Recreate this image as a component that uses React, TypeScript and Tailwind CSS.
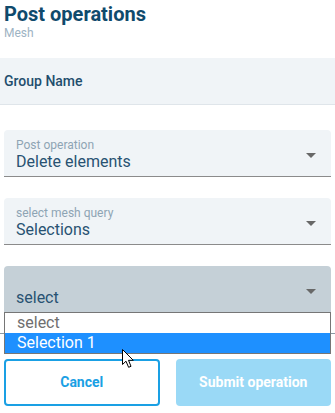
import React from 'react';

type FieldProps = {
  label?: string;
  value: string;
  active?: boolean;
  children?: React.ReactNode;
};

const Caret = () => (
  <span className="mt-1 h-0 w-0 border-x-[5px] border-t-[5px] border-x-transparent border-t-[#686868]" />
);

const SelectField: React.FC<FieldProps> = ({ label, value, active, children }) => (
  <div
    className={`relative flex items-center justify-between rounded-t-[4px] pl-3 pr-[15px] ${
      active ? 'h-[48px] border-b-2 border-[#11405e] bg-[#c5d0d7]' : 'h-[47px] border-b border-[#8b8b8b] bg-[#f0f4f7]'
    }`}
  >
    <div className="flex flex-col self-start pt-2">
      <span className="h-[14px] text-[12px] leading-[14px] text-[#8ea4b4]">{label}</span>
      <span className="text-[16px] leading-[20px] text-[#285272]">{value}</span>
    </div>
    <Caret />
    {children}
  </div>
);

const App: React.FC = () => {
  return (
    <div className="relative h-[413px] w-full overflow-hidden bg-white font-['Roboto',sans-serif]">
      {/* Header */}
      <div className="px-1 pt-[2px]">
        <h1 className="text-[20px] font-bold leading-6 text-[#0f4a6c]">Post operations</h1>
        <p className="text-[12px] leading-[14px] text-[#9db3c3]">Mesh</p>
      </div>

      {/* Group band */}
      <div className="mt-[18px] flex h-[47px] items-center border-b border-[#dfe5ea] bg-[#f0f4f7] px-1">
        <span className="text-[14px] font-medium text-[#1f4e6d]">Group Name</span>
      </div>

      {/* Form */}
      <div className="px-1 pt-[25px]">
        <div className="flex flex-col gap-[21px]">
          <SelectField label="Post operation" value="Delete elements" />
          <SelectField label="select mesh query" value="Selections" />
          <SelectField value="select" active>
            <div className="absolute left-0 right-0 top-full z-10 border border-[#767676] bg-white text-[16px] leading-[20px]">
              <div className="px-3 text-[#6f6f6f]">select</div>
              <div className="bg-[#1e90ff] px-3 text-white">Selection 1</div>
            </div>
          </SelectField>
        </div>

        <div className="-mx-1 mt-[19px] h-px bg-[#8a99a4]" />

        <div className="mt-[25px] grid grid-cols-2 gap-4">
          <button className="h-[47px] rounded-[4px] border-2 border-[#1aa0e4] bg-white text-[14px] font-bold text-[#1aa0e4]">
            Cancel
          </button>
          <button className="h-[47px] rounded-[4px] bg-[#9ad9f6] text-[14px] font-bold text-white">
            Submit operation
          </button>
        </div>
      </div>

      {/* Mouse pointer */}
      <svg className="absolute left-[122px] top-[349px] z-20" width="13" height="20" viewBox="0 0 13 20">
        <path d="M0.5 0.5 L0.5 15.5 L4 12.2 L6.6 18.3 L9 17.3 L6.5 11.3 L11.3 11.3 Z" fill="white" stroke="black" strokeWidth="1" strokeLinejoin="round" />
      </svg>
    </div>
  );
};

export default App;
